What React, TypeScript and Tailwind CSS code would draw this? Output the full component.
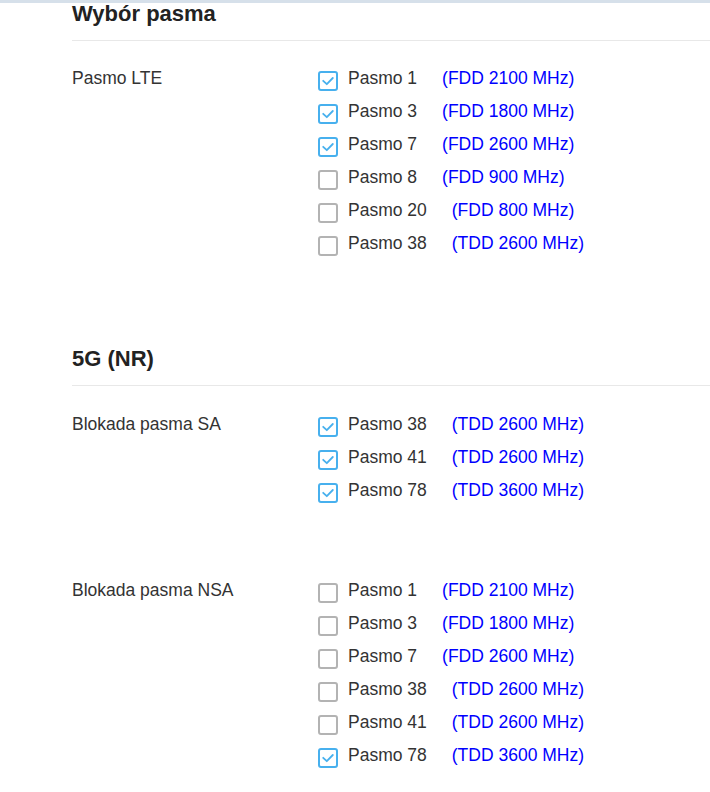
import React from "react";

type Band = { name: string; freq: string; checked: boolean };

const lte: Band[] = [
  { name: "Pasmo 1", freq: "(FDD 2100 MHz)", checked: true },
  { name: "Pasmo 3", freq: "(FDD 1800 MHz)", checked: true },
  { name: "Pasmo 7", freq: "(FDD 2600 MHz)", checked: true },
  { name: "Pasmo 8", freq: "(FDD 900 MHz)", checked: false },
  { name: "Pasmo 20", freq: "(FDD 800 MHz)", checked: false },
  { name: "Pasmo 38", freq: "(TDD 2600 MHz)", checked: false },
];

const sa: Band[] = [
  { name: "Pasmo 38", freq: "(TDD 2600 MHz)", checked: true },
  { name: "Pasmo 41", freq: "(TDD 2600 MHz)", checked: true },
  { name: "Pasmo 78", freq: "(TDD 3600 MHz)", checked: true },
];

const nsa: Band[] = [
  { name: "Pasmo 1", freq: "(FDD 2100 MHz)", checked: false },
  { name: "Pasmo 3", freq: "(FDD 1800 MHz)", checked: false },
  { name: "Pasmo 7", freq: "(FDD 2600 MHz)", checked: false },
  { name: "Pasmo 38", freq: "(TDD 2600 MHz)", checked: false },
  { name: "Pasmo 41", freq: "(TDD 2600 MHz)", checked: false },
  { name: "Pasmo 78", freq: "(TDD 3600 MHz)", checked: true },
];

function Box({ checked }: { checked: boolean }) {
  return checked ? (
    <div className="mt-[9px] flex h-[20px] w-[20px] shrink-0 items-center justify-center rounded-[3px] border-2 border-[#47b0ee] bg-white">
      <svg width="14" height="14" viewBox="0 0 14 14" fill="none">
        <polyline points="2.2,6.8 5.8,10.2 11.8,4" stroke="#47b0ee" strokeWidth="1.8" strokeLinecap="round" strokeLinejoin="round" />
      </svg>
    </div>
  ) : (
    <div className="mt-[9px] h-[20px] w-[20px] shrink-0 rounded-[3px] border-2 border-[#b3b3b3] bg-white" />
  );
}

function Row({ b }: { b: Band }) {
  return (
    <div className="flex h-[33px] items-start">
      <Box checked={b.checked} />
      <span className="ml-[10px] leading-[33px] text-[#333333]">{b.name}</span>
      <span className="ml-[25px] leading-[33px] text-[#0000ff]">{b.freq}</span>
    </div>
  );
}

function Group({ label, bands }: { label: string; bands: Band[] }) {
  return (
    <div className="flex">
      <div className="w-[246px] shrink-0 leading-[33px] text-[#333333]">{label}</div>
      <div className="flex flex-col">
        {bands.map((b, i) => (
          <Row key={i} b={b} />
        ))}
      </div>
    </div>
  );
}

function Heading({ children }: { children: React.ReactNode }) {
  return (
    <div className="pl-[72px]">
      <div className="h-[22px] text-[22px] font-bold leading-[22px] text-[#222222]">{children}</div>
      <div className="mt-[15px] h-px bg-[#e8e8e8]" />
    </div>
  );
}

export default function App() {
  return (
    <div
      className="min-h-[792px] w-[710px] bg-white text-[17.5px]"
      style={{ fontFamily: '"Liberation Sans", Arial, sans-serif' }}
    >
      <div className="h-[3px] w-full bg-[#d6e0ea]" />
      <Heading>Wybór pasma</Heading>
      <div className="pl-[72px] pt-[21px]">
        <Group label="Pasmo LTE" bands={lte} />
      </div>
      <div className="mt-[88px]">
        <Heading>5G (NR)</Heading>
      </div>
      <div className="pl-[72px] pt-[22px]">
        <Group label="Blokada pasma SA" bands={sa} />
      </div>
      <div className="pl-[72px] pt-[67px]">
        <Group label="Blokada pasma NSA" bands={nsa} />
      </div>
    </div>
  );
}
